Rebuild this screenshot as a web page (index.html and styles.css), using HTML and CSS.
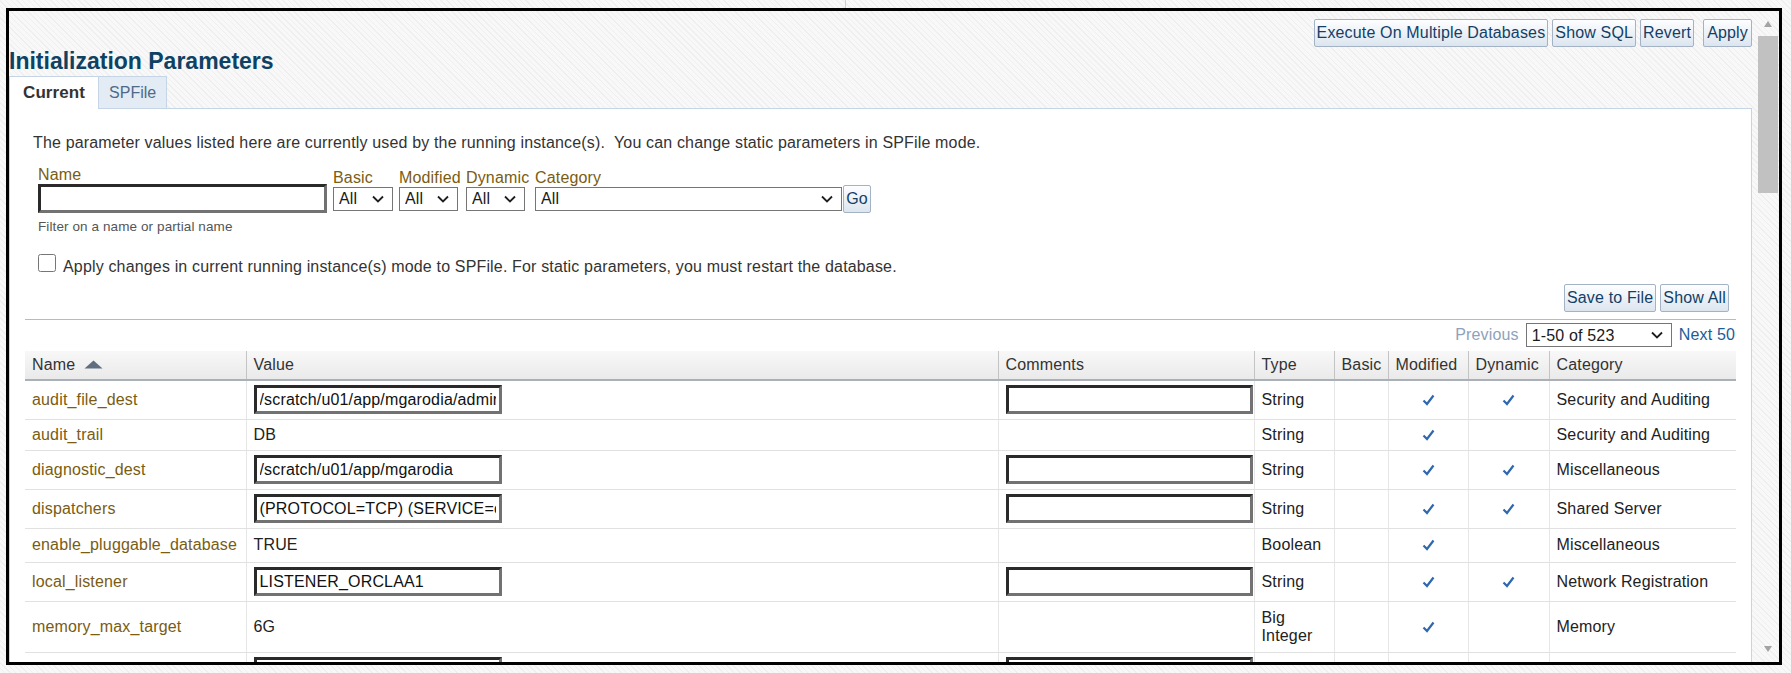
FILE: index.html
```html
<!DOCTYPE html>
<html lang="en">
<head>
<meta charset="utf-8">
<title>Initialization Parameters</title>
<link rel="stylesheet" href="styles.css">
</head>
<body>
<div class="frame">
  <div class="viewport">
    <div class="toolbar">
      <button class="btn">Execute On Multiple Databases</button>
      <button class="btn">Show SQL</button>
      <button class="btn">Revert</button>
      <button class="btn btn-apply">Apply</button>
    </div>
    <h1 class="title">Initialization Parameters</h1>
    <div class="tabs">
      <div class="tab tab-active">Current</div>
      <div class="tab">SPFile</div>
    </div>
    <div class="panel">
      <p class="desc">The parameter values listed here are currently used by the running instance(s).&nbsp; You can change static parameters in SPFile mode.</p>
      <div class="filters">
        <div class="field">
          <label class="lbl">Name</label>
          <input class="txt name-input" type="text">
        </div>
        <div class="field f-basic">
          <label class="lbl">Basic</label>
          <span class="sel sel-sm"><select><option>All</option></select><svg class="chev" width="12" height="8" viewBox="0 0 12 8"><path d="M1 1.5 L6 6.5 L11 1.5" fill="none" stroke="#1e1e1e" stroke-width="1.8"/></svg></span>
        </div>
        <div class="field f-mod">
          <label class="lbl">Modified</label>
          <span class="sel sel-sm"><select><option>All</option></select><svg class="chev" width="12" height="8" viewBox="0 0 12 8"><path d="M1 1.5 L6 6.5 L11 1.5" fill="none" stroke="#1e1e1e" stroke-width="1.8"/></svg></span>
        </div>
        <div class="field f-dyn">
          <label class="lbl">Dynamic</label>
          <span class="sel sel-sm"><select><option>All</option></select><svg class="chev" width="12" height="8" viewBox="0 0 12 8"><path d="M1 1.5 L6 6.5 L11 1.5" fill="none" stroke="#1e1e1e" stroke-width="1.8"/></svg></span>
        </div>
        <div class="field f-cat">
          <label class="lbl">Category</label>
          <span class="sel sel-cat"><select><option>All</option></select><svg class="chev" width="12" height="8" viewBox="0 0 12 8"><path d="M1 1.5 L6 6.5 L11 1.5" fill="none" stroke="#1e1e1e" stroke-width="1.8"/></svg></span>
        </div>
        <div class="field f-go">
          <span class="lbl">&nbsp;</span>
          <button class="btn btn-go">Go</button>
        </div>
      </div>
      <div class="hint">Filter on a name or partial name</div>
      <label class="apply-row"><input type="checkbox" class="chk"><span class="apply-text">Apply changes in current running instance(s) mode to SPFile. For static parameters, you must restart the database.</span></label>
      <div class="actions">
        <button class="btn">Save to File</button>
        <button class="btn">Show All</button>
      </div>
      <hr class="sep">
      <div class="pager">
        <span class="prev">Previous</span>
        <span class="sel sel-page"><select><option>1-50 of 523</option></select><svg class="chev" width="12" height="8" viewBox="0 0 12 8"><path d="M1 1.5 L6 6.5 L11 1.5" fill="none" stroke="#1e1e1e" stroke-width="1.8"/></svg></span>
        <a class="next">Next 50</a>
      </div>
      <table class="grid">
        <colgroup>
          <col class="c-name"><col class="c-value"><col class="c-comm"><col class="c-type"><col class="c-basic"><col class="c-mod"><col class="c-dyn"><col class="c-cat">
        </colgroup>
        <thead>
          <tr>
            <th>Name <svg class="sort" width="19" height="9" viewBox="0 0 19 9"><path d="M0.5 8.5 L9.5 0.5 L18.5 8.5 Z" fill="#5f6f80"/></svg></th>
            <th>Value</th><th>Comments</th><th>Type</th><th>Basic</th><th>Modified</th><th>Dynamic</th><th>Category</th>
          </tr>
        </thead>
        <tbody>
          <tr class="in">
            <td class="pname">audit_file_dest</td>
            <td><input class="txt cell-input" type="text" value="/scratch/u01/app/mgarodia/admin/orcl/adump"></td>
            <td><input class="txt cell-input comm" type="text"></td>
            <td>String</td><td></td>
            <td class="ck"><svg width="13" height="12" viewBox="0 0 13 12"><path d="M1.5 6.5 L5 10 L11.5 1.5" fill="none" stroke="#2f68ad" stroke-width="2.2"/></svg></td>
            <td class="ck"><svg width="13" height="12" viewBox="0 0 13 12"><path d="M1.5 6.5 L5 10 L11.5 1.5" fill="none" stroke="#2f68ad" stroke-width="2.2"/></svg></td>
            <td>Security and Auditing</td>
          </tr>
          <tr class="tx">
            <td class="pname">audit_trail</td>
            <td>DB</td><td></td>
            <td>String</td><td></td>
            <td class="ck"><svg width="13" height="12" viewBox="0 0 13 12"><path d="M1.5 6.5 L5 10 L11.5 1.5" fill="none" stroke="#2f68ad" stroke-width="2.2"/></svg></td>
            <td></td>
            <td>Security and Auditing</td>
          </tr>
          <tr class="in">
            <td class="pname">diagnostic_dest</td>
            <td><input class="txt cell-input" type="text" value="/scratch/u01/app/mgarodia"></td>
            <td><input class="txt cell-input comm" type="text"></td>
            <td>String</td><td></td>
            <td class="ck"><svg width="13" height="12" viewBox="0 0 13 12"><path d="M1.5 6.5 L5 10 L11.5 1.5" fill="none" stroke="#2f68ad" stroke-width="2.2"/></svg></td>
            <td class="ck"><svg width="13" height="12" viewBox="0 0 13 12"><path d="M1.5 6.5 L5 10 L11.5 1.5" fill="none" stroke="#2f68ad" stroke-width="2.2"/></svg></td>
            <td>Miscellaneous</td>
          </tr>
          <tr class="in">
            <td class="pname">dispatchers</td>
            <td><input class="txt cell-input" type="text" value="(PROTOCOL=TCP) (SERVICE=orclXDB)"></td>
            <td><input class="txt cell-input comm" type="text"></td>
            <td>String</td><td></td>
            <td class="ck"><svg width="13" height="12" viewBox="0 0 13 12"><path d="M1.5 6.5 L5 10 L11.5 1.5" fill="none" stroke="#2f68ad" stroke-width="2.2"/></svg></td>
            <td class="ck"><svg width="13" height="12" viewBox="0 0 13 12"><path d="M1.5 6.5 L5 10 L11.5 1.5" fill="none" stroke="#2f68ad" stroke-width="2.2"/></svg></td>
            <td>Shared Server</td>
          </tr>
          <tr class="tx2">
            <td class="pname">enable_pluggable_database</td>
            <td>TRUE</td><td></td>
            <td>Boolean</td><td></td>
            <td class="ck"><svg width="13" height="12" viewBox="0 0 13 12"><path d="M1.5 6.5 L5 10 L11.5 1.5" fill="none" stroke="#2f68ad" stroke-width="2.2"/></svg></td>
            <td></td>
            <td>Miscellaneous</td>
          </tr>
          <tr class="in">
            <td class="pname">local_listener</td>
            <td><input class="txt cell-input" type="text" value="LISTENER_ORCLAA1"></td>
            <td><input class="txt cell-input comm" type="text"></td>
            <td>String</td><td></td>
            <td class="ck"><svg width="13" height="12" viewBox="0 0 13 12"><path d="M1.5 6.5 L5 10 L11.5 1.5" fill="none" stroke="#2f68ad" stroke-width="2.2"/></svg></td>
            <td class="ck"><svg width="13" height="12" viewBox="0 0 13 12"><path d="M1.5 6.5 L5 10 L11.5 1.5" fill="none" stroke="#2f68ad" stroke-width="2.2"/></svg></td>
            <td>Network Registration</td>
          </tr>
          <tr class="two">
            <td class="pname">memory_max_target</td>
            <td>6G</td><td></td>
            <td>Big Integer</td><td></td>
            <td class="ck"><svg width="13" height="12" viewBox="0 0 13 12"><path d="M1.5 6.5 L5 10 L11.5 1.5" fill="none" stroke="#2f68ad" stroke-width="2.2"/></svg></td>
            <td></td>
            <td>Memory</td>
          </tr>
          <tr class="in last">
            <td class="pname"></td>
            <td><input class="txt cell-input" type="text"></td>
            <td><input class="txt cell-input comm" type="text"></td>
            <td></td><td></td>
            <td class="ck"><svg width="13" height="12" viewBox="0 0 13 12"><path d="M1.5 6.5 L5 10 L11.5 1.5" fill="none" stroke="#2f68ad" stroke-width="2.2"/></svg></td>
            <td class="ck"><svg width="13" height="12" viewBox="0 0 13 12"><path d="M1.5 6.5 L5 10 L11.5 1.5" fill="none" stroke="#2f68ad" stroke-width="2.2"/></svg></td>
            <td></td>
          </tr>
        </tbody>
      </table>
    </div>
  </div>
  <div class="scrollbar">
    <div class="arrow arrow-up"></div>
    <div class="thumb"></div>
    <div class="track-fill"></div>
    <div class="arrow arrow-down"></div>
  </div>
</div>
</body>
</html>
```

FILE: styles.css
```css
* { box-sizing: border-box; }

html, body { margin: 0; padding: 0; }

body {
  width: 1791px;
  height: 673px;
  overflow: hidden;
  font-family: "Liberation Sans", Arial, sans-serif;
  font-size: 16px;
  letter-spacing: 0.16px;
  color: #333;
  background:
    linear-gradient(#cfcfcf, #cfcfcf) 845px 0 / 1px 8px no-repeat,
    repeating-linear-gradient(45deg, #f8f8f8 0 3px, #efefef 3px 4px);
}

.frame {
  margin: 8px 0 0 6px;
  width: 1776px;
  height: 657px;
  border: 3px solid #000;
  display: flex;
  overflow: hidden;
}

.viewport {
  flex: 1;
  min-width: 0;
  padding: 8px 5px 0 0;
  display: flex;
  flex-direction: column;
  overflow: hidden;
}

/* buttons */
.btn {
  font-family: inherit;
  font-size: 16px;
  letter-spacing: inherit;
  height: 28px;
  padding: 0 2px;
  border: 1px solid #a3b3c5;
  border-radius: 2px;
  background: linear-gradient(#fdfeff, #dce5ef);
  color: #133f66;
  white-space: nowrap;
}

.toolbar {
  display: flex;
  justify-content: flex-end;
  gap: 4px;
  flex: none;
}

.btn-apply { margin-left: 5px; padding: 0 3px; }

.title {
  margin: 2px 0 0;
  font-size: 23px;
  line-height: 24px;
  letter-spacing: 0;
  font-weight: bold;
  color: #0e4264;
  flex: none;
}

.tabs {
  display: flex;
  margin-top: 3px;
  height: 32px;
  flex: none;
}

.tab {
  display: flex;
  align-items: center;
  padding: 0 10px;
  border: 1px solid #c5d5e6;
  border-bottom: none;
  background: #e3ebf4;
  color: #4f6a88;
  font-size: 16px;
  letter-spacing: 0;
}

.tab-active {
  position: relative;
  margin-bottom: -1px;
  padding: 0 13px;
  background: #fff;
  color: #333;
  font-weight: bold;
  font-size: 17px;
  letter-spacing: 0.1px;
  border-right: none;
}

.panel {
  flex: none;
  background: #fff;
  border: 1px solid #c5d5e6;
  padding: 25px 15px 0;
}

.desc {
  margin: 0 0 0 8px;
  line-height: 18px;
}

/* filters */
.filters {
  display: flex;
  align-items: center;
  margin: 14px 0 0 13px;
}

.field {
  display: flex;
  flex-direction: column;
}

.lbl {
  width: 0;
  height: 18px;
  line-height: 18px;
  white-space: nowrap;
  color: #7a5c12;
}

.f-basic { margin-left: 6px; }
.f-mod { margin-left: 6px; }
.f-dyn { margin-left: 8px; }
.f-cat { margin-left: 10px; }
.f-go { margin-left: 1px; }

.txt {
  font-family: inherit;
  font-size: 16px;
  letter-spacing: inherit;
  color: #111;
  background: #fff;
  border-style: solid;
  border-width: 3px;
  border-color: #2a2a2a #727272 #727272 #2a2a2a;
  padding: 0 3px;
  outline: none;
}

.name-input { width: 289px; height: 29px; }

.sel {
  position: relative;
  display: inline-block;
  height: 24px;
}

.sel select {
  appearance: none;
  -webkit-appearance: none;
  width: 100%;
  height: 24px;
  border: 1px solid #767676;
  border-radius: 0;
  background: #fff;
  font-family: inherit;
  font-size: 16px;
  letter-spacing: inherit;
  color: #1a1a1a;
  padding: 0 0 0 5px;
}

.chev {
  position: absolute;
  right: 9px;
  top: 8px;
  pointer-events: none;
}

.sel-sm { width: 60px; }
.f-mod .sel-sm, .f-dyn .sel-sm { width: 59px; }
.sel-cat { width: 307px; }
.sel-page { width: 146px; }

.btn-go { width: 28px; padding: 0; }

.hint {
  margin: 6px 0 0 13px;
  font-size: 13.5px;
  letter-spacing: 0.1px;
  line-height: 16px;
  color: #555;
}

.apply-row {
  display: flex;
  align-items: flex-start;
  gap: 7px;
  margin: 19px 0 0 13px;
}

.chk {
  margin: 0;
  width: 18px;
  height: 18px;
}

.apply-text {
  margin-top: 4px;
  line-height: 18px;
}

.actions {
  display: flex;
  justify-content: flex-end;
  gap: 4px;
  margin: 8px 7px 0 0;
}

.sep {
  margin: 7px 0 0;
  border: 0;
  border-top: 1px solid #b3bbc5;
  height: 0;
}

.pager {
  display: flex;
  justify-content: flex-end;
  align-items: center;
  gap: 7px;
  margin: 3px 1px 0 0;
  height: 24px;
}

.prev { color: #8ea2bb; }
.next { color: #1d5c97; }

/* table */
.grid {
  margin-top: 4px;
  width: 1711px;
  table-layout: fixed;
  border-collapse: collapse;
}

.c-name { width: 221px; }
.c-value { width: 752px; }
.c-comm { width: 256px; }
.c-type { width: 80px; }
.c-basic { width: 54px; }
.c-mod { width: 80px; }
.c-dyn { width: 81px; }
.c-cat { width: 187px; }

.grid th {
  height: 29px;
  padding: 0 7px;
  text-align: left;
  font-weight: normal;
  color: #333;
  white-space: nowrap;
  background: linear-gradient(#f8f8f8, #eaeaea);
  border-left: 1px solid #c4c4c4;
  border-bottom: 2px solid #a9b0b7;
}

.grid th:first-child, .grid td:first-child { border-left: none; }

.sort { margin-left: 4px; vertical-align: 1px; }

.grid td {
  padding: 0 7px;
  line-height: 18px;
  vertical-align: middle;
  color: #222;
  border-left: 1px solid #e6e6e6;
  border-bottom: 1px solid #e1e1e1;
}

.grid td.pname { color: #7a5c12; white-space: nowrap; }
.grid td.ck { text-align: center; }
.grid td.ck svg { display: inline-block; vertical-align: -1px; }

.grid tr.in { height: 39px; }
.grid tr.tx { height: 31px; }
.grid tr.tx2 { height: 34px; }
.grid tr.two { height: 51px; }
.grid tr.last td { vertical-align: top; padding-top: 4px; }
.grid tr.last td.ck { padding-top: 8px; }

.cell-input { width: 248px; height: 29px; display: block; }
.cell-input.comm { width: 247px; }

/* fake scrollbar */
.scrollbar {
  flex: none;
  width: 22px;
  display: flex;
  flex-direction: column;
  align-items: center;
}

.arrow {
  width: 0;
  height: 0;
  border-style: solid;
  border-color: transparent;
}

.arrow-up {
  margin-top: 10px;
  border-width: 0 4px 6px;
  border-bottom-color: #a3a3a3;
}

.thumb {
  margin-top: 9px;
  width: 20px;
  height: 157px;
  background: #c1c1c1;
}

.track-fill { flex: 1; }

.arrow-down {
  margin-bottom: 10px;
  border-width: 6px 4px 0;
  border-top-color: #a3a3a3;
}
```
